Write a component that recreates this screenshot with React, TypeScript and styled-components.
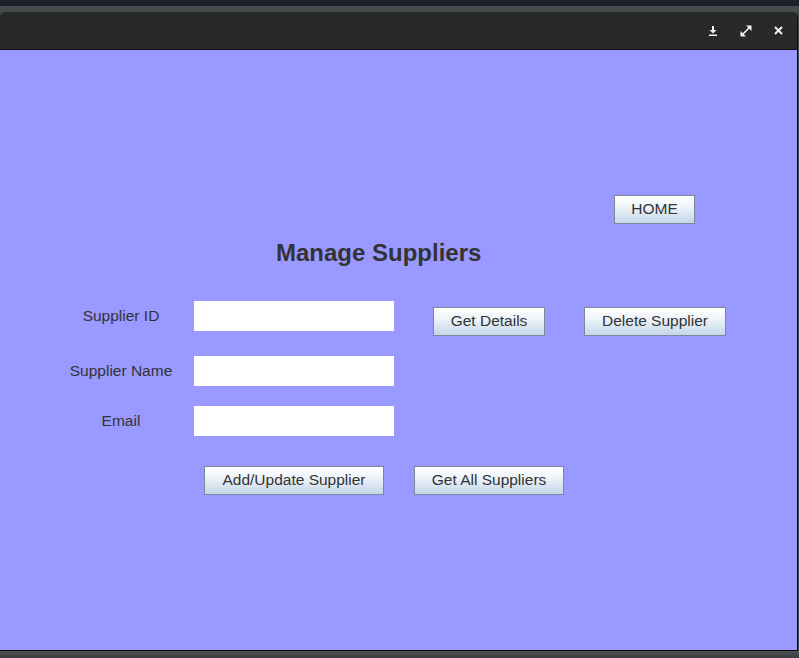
import React from "react";
import styled, { createGlobalStyle } from "styled-components";

const GlobalStyle = createGlobalStyle`
  html, body {
    margin: 0;
    padding: 0;
    background: #1d2029;
  }
  body {
    font-family: "Liberation Sans", Arial, sans-serif;
  }
`;

const Desktop = styled.div`
  width: 799px;
  height: 658px;
  display: flex;
  flex-direction: column;
  overflow: hidden;
  background: #1d2029;
`;

const TopStrip = styled.div`
  height: 6px;
  flex-shrink: 0;
  background: #1d2029;
`;

const Shelf = styled.div`
  flex: 1;
  display: flex;
  flex-direction: column;
  background: #464b4e;
`;

const Window = styled.div`
  margin-top: 6px;
  width: 797px;
  border-right: 1px solid #0b0b0b;
  border-radius: 5px 5px 0 0;
  overflow: hidden;
  display: flex;
  flex-direction: column;
  flex-shrink: 0;
`;

const TitleBar = styled.div`
  height: 37px;
  background: #292929;
  border-bottom: 1px solid #0c0c0c;
  display: flex;
  align-items: center;
  justify-content: flex-end;
  gap: 22px;
  padding-right: 14px;
`;

const TitleIcon = styled.svg`
  display: block;
  fill: #f2f2f2;
  stroke: #f2f2f2;
`;

const Content = styled.div`
  height: 601px;
  background: #9999ff;
  border-bottom: 1px solid #050505;
  display: flex;
  flex-direction: column;
  padding-top: 145px;
  box-sizing: border-box;
`;

const Bottom = styled.div`
  flex: 1;
  background: linear-gradient(#4c5151, #383c3d);
`;

const HomeRow = styled.div`
  display: flex;
  padding-left: 614px;
`;

const Heading = styled.h1`
  margin: 15px 0 0;
  padding-left: 276px;
  height: 28px;
  line-height: 28px;
  font-size: 24px;
  font-weight: bold;
  color: #333333;
`;

const FieldRow = styled.div<{ $top: number }>`
  display: flex;
  align-items: center;
  height: 30px;
  margin-top: ${({ $top }) => $top}px;
  padding-left: 59px;
`;

const FieldLabel = styled.label`
  width: 124px;
  margin-right: 11px;
  text-align: center;
  font-size: 15.5px;
  color: #333333;
`;

const TextField = styled.input`
  width: 200px;
  height: 30px;
  border: none;
  padding: 0 4px;
  box-sizing: border-box;
  background: #ffffff;
  font-family: inherit;
  font-size: 15px;
  outline: none;
`;

const ButtonRow = styled.div`
  display: flex;
  gap: 30px;
  margin-top: 30px;
  padding-left: 204px;
`;

const Button = styled.button<{ $width: number; $offset?: number; $drop?: number }>`
  width: ${({ $width }) => $width}px;
  height: 29px;
  margin-left: ${({ $offset }) => $offset ?? 0}px;
  align-self: flex-start;
  margin-top: ${({ $drop }) => $drop ?? 0}px;
  padding: 0 0 1px;
  box-sizing: border-box;
  border: 1px solid #7a8999;
  border-radius: 0;
  background: linear-gradient(#ffffff 0%, #f0f5fa 35%, #c4d7e8 100%);
  font-family: "Liberation Sans", Arial, sans-serif;
  font-size: 15.5px;
  color: #333333;
  cursor: pointer;
`;

const DownloadIcon = () => (
  <TitleIcon width="10" height="10" viewBox="0 0 10 10">
    <rect x="4" y="0" width="2" height="4" stroke="none" />
    <polygon points="1.5,4 8.5,4 5,7.5" stroke="none" />
    <rect x="1" y="8.5" width="8" height="1.5" stroke="none" />
  </TitleIcon>
);

const MaximizeIcon = () => (
  <TitleIcon width="12" height="12" viewBox="0 0 12 12">
    <line x1="2.5" y1="9.5" x2="9.5" y2="2.5" strokeWidth="1.6" />
    <polygon points="6,0.5 11.5,0.5 11.5,6" stroke="none" />
    <polygon points="0.5,6 0.5,11.5 6,11.5" stroke="none" />
  </TitleIcon>
);

const CloseIcon = () => (
  <TitleIcon width="9" height="9" viewBox="0 0 9 9">
    <line x1="1" y1="1" x2="8" y2="8" strokeWidth="2" />
    <line x1="8" y1="1" x2="1" y2="8" strokeWidth="2" />
  </TitleIcon>
);

export default function App() {
  return (
    <>
      <GlobalStyle />
      <Desktop>
        <TopStrip />
        <Shelf>
          <Window>
            <TitleBar>
              <DownloadIcon />
              <MaximizeIcon />
              <CloseIcon />
            </TitleBar>
            <Content>
              <HomeRow>
                <Button $width={81}>HOME</Button>
              </HomeRow>
              <Heading>Manage Suppliers</Heading>
              <FieldRow $top={34}>
                <FieldLabel>Supplier ID</FieldLabel>
                <TextField />
                <Button $width={112} $offset={39} $drop={6}>
                  Get Details
                </Button>
                <Button $width={142} $offset={39} $drop={6}>
                  Delete Supplier
                </Button>
              </FieldRow>
              <FieldRow $top={25}>
                <FieldLabel>Supplier Name</FieldLabel>
                <TextField />
              </FieldRow>
              <FieldRow $top={20}>
                <FieldLabel>Email</FieldLabel>
                <TextField />
              </FieldRow>
              <ButtonRow>
                <Button $width={180}>Add/Update Supplier</Button>
                <Button $width={150}>Get All Suppliers</Button>
              </ButtonRow>
            </Content>
          </Window>
          <Bottom />
        </Shelf>
      </Desktop>
    </>
  );
}
